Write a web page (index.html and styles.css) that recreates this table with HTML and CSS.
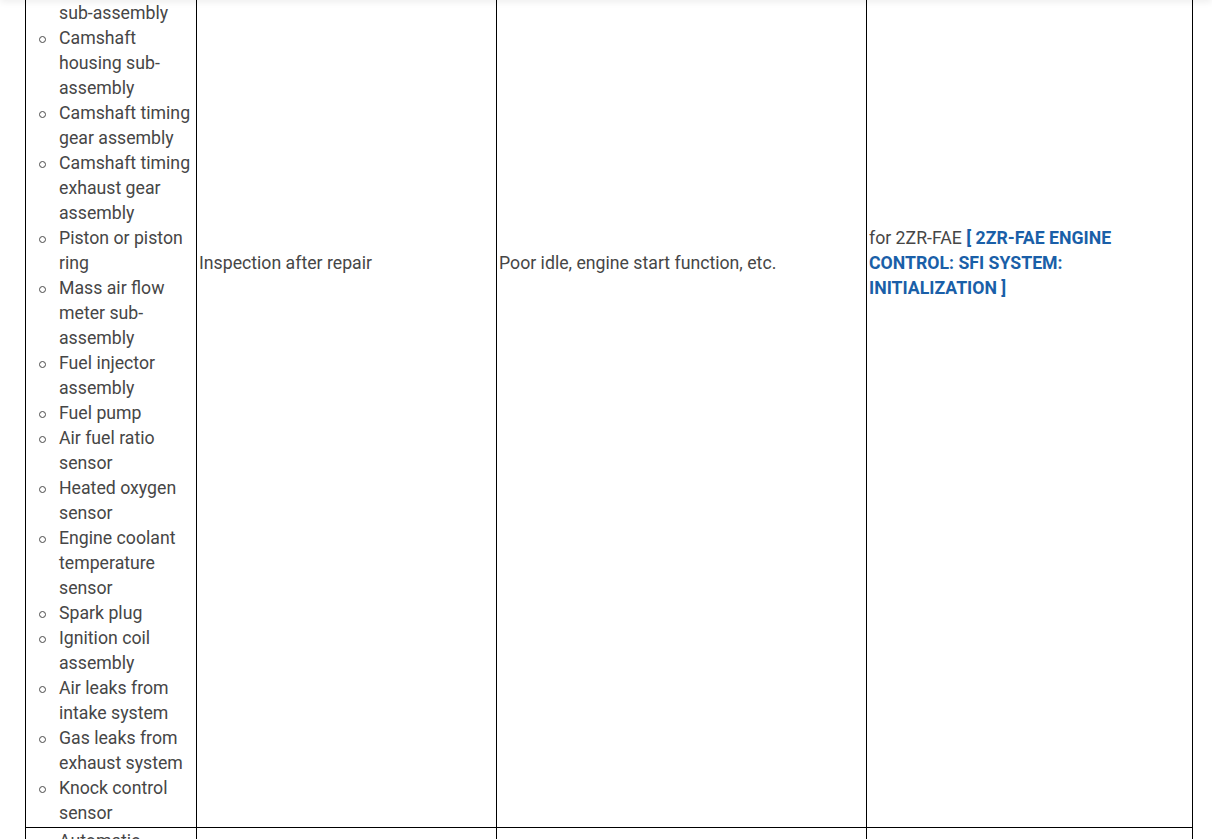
FILE: index.html
```html
<!DOCTYPE html>
<html lang="en">
<head>
<meta charset="utf-8">
<title>Initialization</title>
<link rel="stylesheet" href="styles.css">
</head>
<body>
<header class="topbar"></header>
<main class="page">
<table class="spec">
<colgroup>
<col class="c1"><col class="c2"><col class="c3"><col class="c4">
</colgroup>
<tbody>
<tr>
<td>
<ul class="parts">
<li>ECM</li>
<li>Engine assembly</li>
<li>Cylinder head sub-assembly</li>
<li>Camshaft</li>
<li>No. 2 camshaft</li>
<li>Camshaft timing oil control valve</li>
<li>Timing chain cover</li>
<li>Throttle body</li>
<li>Intake manifold sub-assembly</li>
<li>Camshaft housing sub-assembly</li>
<li>Camshaft timing gear assembly</li>
<li>Camshaft timing exhaust gear assembly</li>
<li>Piston or piston ring</li>
<li>Mass air flow meter sub-assembly</li>
<li>Fuel injector assembly</li>
<li>Fuel pump</li>
<li>Air fuel ratio sensor</li>
<li>Heated oxygen sensor</li>
<li>Engine coolant temperature sensor</li>
<li>Spark plug</li>
<li>Ignition coil assembly</li>
<li>Air leaks from intake system</li>
<li>Gas leaks from exhaust system</li>
<li>Knock control sensor</li>
</ul>
</td>
<td>Inspection after repair</td>
<td>Poor idle, engine start function, etc.</td>
<td>for 2ZR-FAE <a class="ref" href="#">[ 2ZR-FAE ENGINE CONTROL: SFI SYSTEM: INITIALIZATION ]</a></td>
</tr>
<tr>
<td>
<ul class="parts">
<li>Automatic transaxle assembly</li>
<li>ECM</li>
</ul>
</td>
<td>Initialization</td>
<td>Shift quality</td>
<td>for CVT <a class="ref" href="#">[ CVT: INITIALIZATION ]</a></td>
</tr>
</tbody>
</table>
</main>
</body>
</html>
```
FILE: styles.css
```css
html, body {
  margin: 0;
  padding: 0;
  background: #ffffff;
}
body {
  font-family: Roboto, "Liberation Sans", sans-serif;
  font-size: 17.7px;
  line-height: 25px;
  color: #464646;
}
.topbar {
  position: fixed;
  top: -40px;
  left: 0;
  right: 0;
  height: 40px;
  background: #ffffff;
  box-shadow: 0 2px 7px rgba(0, 0, 0, 0.07);
  z-index: 5;
}
.page {
  padding: 0 20px 0 25px;
  margin-top: -301px;
}
.spec {
  width: 1167px;
  border-collapse: collapse;
  table-layout: fixed;
}
.c1 { width: 171px; }
.c2 { width: 300px; }
.c3 { width: 370px; }
.c4 { width: 326px; }
.spec td {
  border: 1px solid #000000;
  padding: 1px 2px;
  vertical-align: middle;
}
.parts {
  margin: 0;
  padding-left: 31px;
  list-style: none;
}
.parts li {
  position: relative;
}
.parts li::before {
  content: "";
  position: absolute;
  left: -20px;
  top: 10px;
  width: 7px;
  height: 7px;
  box-sizing: border-box;
  border: 1.3px solid #4a4a4a;
  border-radius: 50%;
}
.ref {
  color: #1a5fa8;
  font-weight: bold;
  text-decoration: none;
}
```
